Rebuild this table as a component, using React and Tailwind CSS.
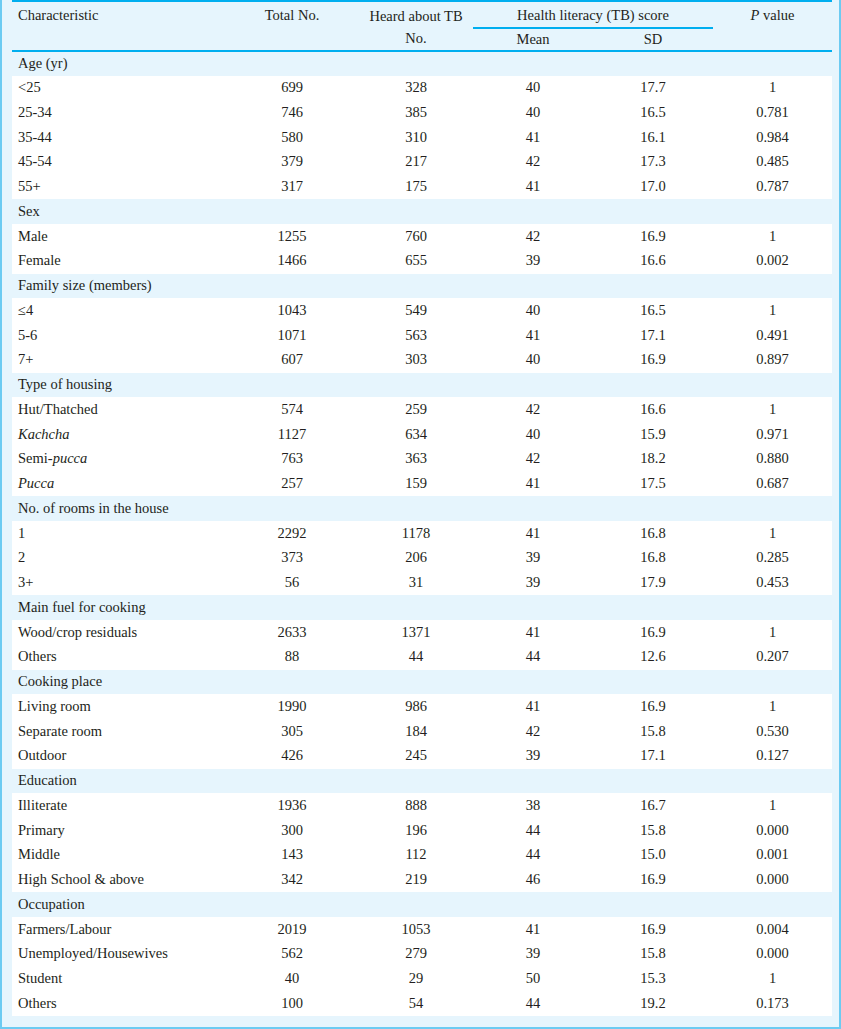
const groups = [
  {
    title: "Age (yr)",
    rows: [
      ["<25", "699", "328", "40", "17.7", "1"],
      ["25-34", "746", "385", "40", "16.5", "0.781"],
      ["35-44", "580", "310", "41", "16.1", "0.984"],
      ["45-54", "379", "217", "42", "17.3", "0.485"],
      ["55+", "317", "175", "41", "17.0", "0.787"],
    ],
  },
  {
    title: "Sex",
    rows: [
      ["Male", "1255", "760", "42", "16.9", "1"],
      ["Female", "1466", "655", "39", "16.6", "0.002"],
    ],
  },
  {
    title: "Family size (members)",
    rows: [
      ["≤4", "1043", "549", "40", "16.5", "1"],
      ["5-6", "1071", "563", "41", "17.1", "0.491"],
      ["7+", "607", "303", "40", "16.9", "0.897"],
    ],
  },
  {
    title: "Type of housing",
    rows: [
      ["Hut/Thatched", "574", "259", "42", "16.6", "1"],
      [<i>Kachcha</i>, "1127", "634", "40", "15.9", "0.971"],
      [<>Semi-<i>pucca</i></>, "763", "363", "42", "18.2", "0.880"],
      [<i>Pucca</i>, "257", "159", "41", "17.5", "0.687"],
    ],
  },
  {
    title: "No. of rooms in the house",
    rows: [
      ["1", "2292", "1178", "41", "16.8", "1"],
      ["2", "373", "206", "39", "16.8", "0.285"],
      ["3+", "56", "31", "39", "17.9", "0.453"],
    ],
  },
  {
    title: "Main fuel for cooking",
    rows: [
      ["Wood/crop residuals", "2633", "1371", "41", "16.9", "1"],
      ["Others", "88", "44", "44", "12.6", "0.207"],
    ],
  },
  {
    title: "Cooking place",
    rows: [
      ["Living room", "1990", "986", "41", "16.9", "1"],
      ["Separate room", "305", "184", "42", "15.8", "0.530"],
      ["Outdoor", "426", "245", "39", "17.1", "0.127"],
    ],
  },
  {
    title: "Education",
    rows: [
      ["Illiterate", "1936", "888", "38", "16.7", "1"],
      ["Primary", "300", "196", "44", "15.8", "0.000"],
      ["Middle", "143", "112", "44", "15.0", "0.001"],
      ["High School & above", "342", "219", "46", "16.9", "0.000"],
    ],
  },
  {
    title: "Occupation",
    rows: [
      ["Farmers/Labour", "2019", "1053", "41", "16.9", "0.004"],
      ["Unemployed/Housewives", "562", "279", "39", "15.8", "0.000"],
      ["Student", "40", "29", "50", "15.3", "1"],
      ["Others", "100", "54", "44", "19.2", "0.173"],
    ],
  },
]

function DataRow({ row }) {
  return (
    <tr className="bg-white h-[24.75px]">
      <td className="pl-[6px] text-left">{row[0]}</td>
      {row.slice(1).map((v, i) => (
        <td key={i} className="text-center">{v}</td>
      ))}
    </tr>
  )
}

export default function App() {
  return (
    <div className="w-[841px] bg-[#e6f5fd] border-x-2 border-b-2 border-[#6ccbf2] pl-[10px] pr-[7px] pb-[11px] font-['Liberation_Serif',serif] text-[14.5px] text-[#231f20]">
      <table className="w-[820px] border-collapse table-fixed">
        <colgroup>
          <col className="w-[213px]" />
          <col className="w-[134px]" />
          <col className="w-[114px]" />
          <col className="w-[120px]" />
          <col className="w-[120px]" />
          <col className="w-[119px]" />
        </colgroup>
        <thead>
          <tr className="border-t-2 border-[#00aeef] h-[25px]">
            <th rowSpan={2} className="font-normal text-left align-top pl-[6px] pt-[3px]">Characteristic</th>
            <th rowSpan={2} className="font-normal text-center align-top pt-[3px]">Total No.</th>
            <th rowSpan={2} className="font-normal text-center align-top pt-[3px] leading-[22px]">
              Heard about TB No.
            </th>
            <th colSpan={2} className="font-normal text-center align-top pt-[3px] border-b-2 border-[#00aeef]">
              Health literacy (TB) score
            </th>
            <th rowSpan={2} className="font-normal text-center align-top pt-[3px]">
              <i>P</i> value
            </th>
          </tr>
          <tr className="h-[23px] border-b-2 border-[#00aeef]">
            <th className="font-normal text-center leading-[20px]">Mean</th>
            <th className="font-normal text-center leading-[20px]">SD</th>
          </tr>
        </thead>
        <tbody>
          {groups.map((g) => (
            <>
              <tr key={g.title} className="h-[24.75px]">
                <td colSpan={6} className="pl-[6px] text-left">{g.title}</td>
              </tr>
              {g.rows.map((r, i) => (
                <DataRow key={g.title + i} row={r} />
              ))}
            </>
          ))}
        </tbody>
      </table>
    </div>
  )
}
